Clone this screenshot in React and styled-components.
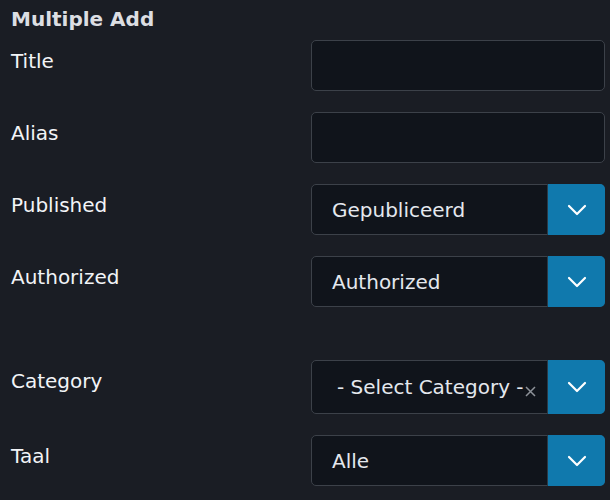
import React from "react";
import styled, { createGlobalStyle } from "styled-components";

const Global = createGlobalStyle`
  html, body {
    margin: 0;
    background: #1a1d24;
    font-family: "DejaVu Sans", "Liberation Sans", sans-serif;
  }
`;

const Page = styled.div`
  padding: 7px 5px 0 11px;
`;

const Heading = styled.h3`
  margin: 0 0 9px;
  font-size: 20px;
  line-height: 24px;
  font-weight: bold;
  color: #dcdee2;
`;

const Row = styled.div`
  display: grid;
  grid-template-columns: 300px 294px;
  margin-bottom: ${(p) => (p.$extra ? 53 : 21)}px;
`;

const Label = styled.label`
  padding-top: 6px;
  font-size: 20px;
  line-height: 30px;
  color: #f2f4f7;
`;

const Field = styled.div`
  position: relative;
  box-sizing: border-box;
  height: ${(p) => p.$h || 51}px;
  display: flex;
  align-items: center;
  background: #10141b;
  border: 1px solid #3c4149;
  border-radius: 5px;
  padding-left: ${(p) => p.$pad || 20}px;
  font-size: 20px;
  line-height: 24px;
  color: #e4e8ee;
`;

const Caret = styled.span`
  position: absolute;
  top: -1px;
  right: -1px;
  bottom: -1px;
  width: 57px;
  display: flex;
  align-items: center;
  justify-content: center;
  background: #1079ad;
  border-left: 1px solid #2b3a46;
  border-radius: 0 5px 5px 0;
`;

const Clear = styled.span`
  display: inline-flex;
  align-self: flex-end;
  margin: 0 0 16px 1px;
`;

const Chevron = () => (
  <svg width="20" height="12" viewBox="0 0 20 12">
    <path d="M2 2l8 8 8-8" fill="none" stroke="#fff" strokeWidth="2.2" strokeLinecap="round" strokeLinejoin="round" />
  </svg>
);

const Select = ({ value, h, pad, clear }) => (
  <Field $h={h} $pad={pad}>
    <span>{value}</span>
    {clear && (
      <Clear>
        <svg width="11" height="11" viewBox="0 0 11 11">
          <path d="M1 1l9 9M10 1l-9 9" stroke="#8d9299" strokeWidth="1.5" />
        </svg>
      </Clear>
    )}
    <Caret>
      <Chevron />
    </Caret>
  </Field>
);

export default function App() {
  return (
    <Page>
      <Global />
      <Heading>Multiple Add</Heading>
      <Row>
        <Label>Title</Label>
        <Field />
      </Row>
      <Row>
        <Label>Alias</Label>
        <Field />
      </Row>
      <Row>
        <Label>Published</Label>
        <Select value="Gepubliceerd" />
      </Row>
      <Row $extra>
        <Label>Authorized</Label>
        <Select value="Authorized" />
      </Row>
      <Row>
        <Label>Category</Label>
        <Select value="- Select Category -" h={54} pad={25} clear />
      </Row>
      <Row>
        <Label>Taal</Label>
        <Select value="Alle" />
      </Row>
    </Page>
  );
}
